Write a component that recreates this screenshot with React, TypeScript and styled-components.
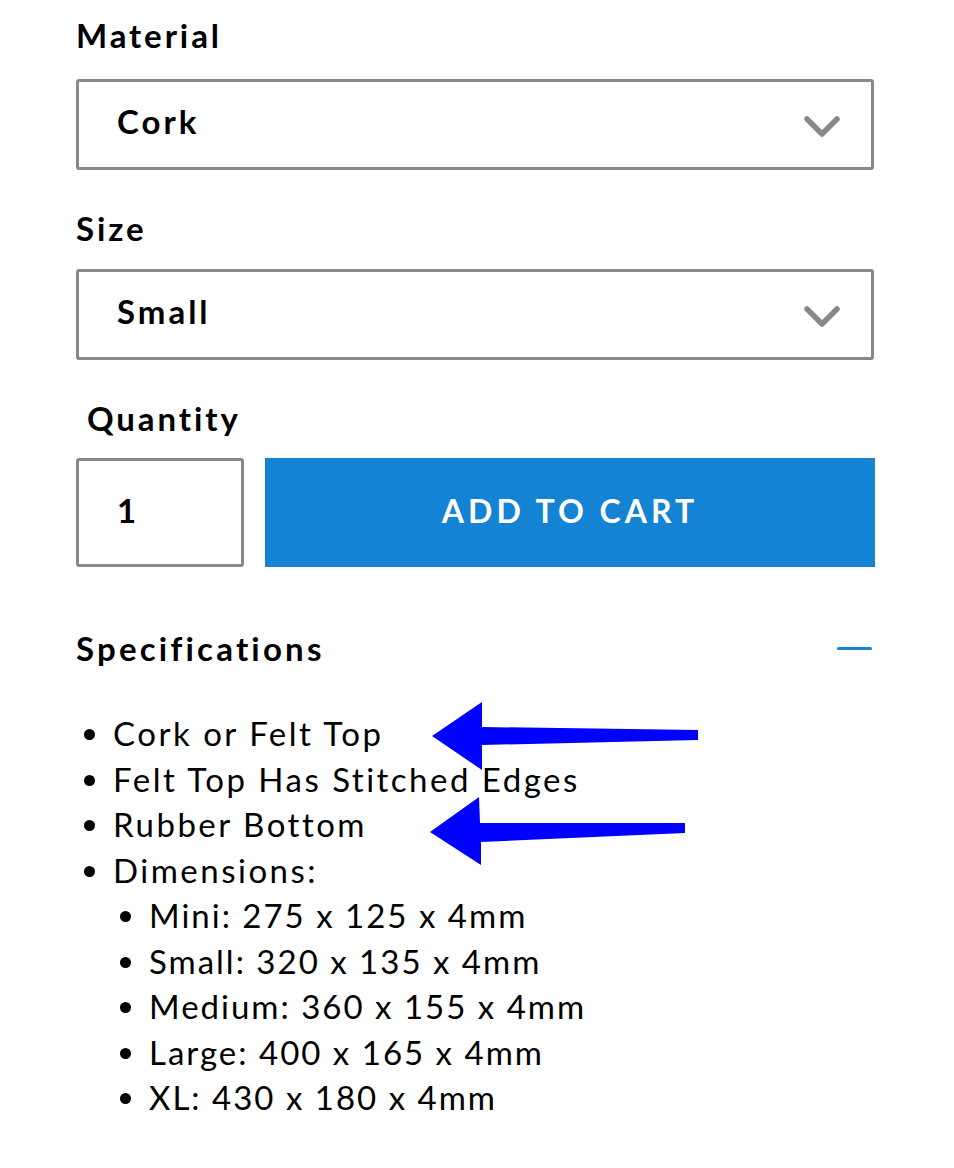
import React from "react";
import styled, { createGlobalStyle } from "styled-components";

const Global = createGlobalStyle`
  html, body { margin: 0; padding: 0; background: #fff; }
  body { font-family: Lato, "Noto Sans", sans-serif; color: #000; }
`;

const Page = styled.div`
  position: relative;
  width: 954px;
  min-height: 1168px;
  box-sizing: border-box;
  padding: 16px 80px 0 76px;
`;

const Label = styled.div<{ $indent?: number; $gap?: number }>`
  font-size: 33px;
  line-height: 38px;
  font-weight: 700;
  letter-spacing: 2.9px;
  padding-left: ${(p) => p.$indent ?? 0}px;
  margin-bottom: ${(p) => p.$gap ?? 22}px;
`;

const Select = styled.div`
  box-sizing: border-box;
  height: 91px;
  border: 3px solid #888;
  border-radius: 3px;
  display: flex;
  align-items: center;
  justify-content: space-between;
  padding: 0 31px 0 38px;
  margin-bottom: 39px;
`;

const SelectValue = styled.span`
  font-size: 33px;
  font-weight: 700;
  letter-spacing: 3px;
  margin-bottom: 7px;
`;

const ChevronSvg = styled.svg`
  margin-top: 4px;
`;

const Chevron = () => (
  <ChevronSvg width="36" height="22" viewBox="0 0 36 22">
    <path d="M3 3 L18 18 L33 3" fill="none" stroke="#888" strokeWidth="5.5" strokeLinecap="round" strokeLinejoin="round" />
  </ChevronSvg>
);

const CartRow = styled.div`
  display: flex;
  gap: 21px;
  height: 109px;
  margin-bottom: 62px;
`;

const QtyBox = styled.div`
  box-sizing: border-box;
  width: 168px;
  border: 3px solid #888;
  border-radius: 3px;
  display: flex;
  align-items: center;
  padding: 0 0 5px 38px;
  font-size: 33px;
  font-weight: 700;
`;

const CartButton = styled.button`
  flex: 1;
  border: none;
  background: #1483d4;
  color: #fff;
  font-family: Lato, "Noto Sans", sans-serif;
  font-size: 32px;
  font-weight: 700;
  letter-spacing: 4px;
  padding: 0 0 5px 0;
  margin-right: -1px;
`;

const SpecHeader = styled.div`
  display: flex;
  align-items: center;
  justify-content: space-between;
  font-size: 33px;
  line-height: 38px;
  font-weight: 700;
  letter-spacing: 3.2px;
  margin-bottom: 44px;
`;

const Minus = styled.span`
  width: 35px;
  height: 3px;
  border-radius: 2px;
  background: #1483d4;
  margin-right: 2px;
`;

const List = styled.ul`
  margin: 0;
  padding-left: 37px;
  font-size: 33px;
  line-height: 45.5px;
  font-weight: 400;
  letter-spacing: 2.5px;
  list-style: disc;
`;

const SubList = styled.ul`
  margin: 0;
  padding-left: 36px;
  list-style: disc;
  letter-spacing: 2px;
`;

const Arrows = styled.svg`
  position: absolute;
  left: 0;
  top: 0;
  pointer-events: none;
`;

export default function App() {
  return (
    <>
      <Global />
      <Page>
        <Label $gap={25}>Material</Label>
        <Select>
          <SelectValue>Cork</SelectValue>
          <Chevron />
        </Select>
        <Label>Size</Label>
        <Select>
          <SelectValue>Small</SelectValue>
          <Chevron />
        </Select>
        <Label $indent={11} $gap={21}>Quantity</Label>
        <CartRow>
          <QtyBox>1</QtyBox>
          <CartButton>ADD TO CART</CartButton>
        </CartRow>
        <SpecHeader>
          <span>Specifications</span>
          <Minus />
        </SpecHeader>
        <List>
          <li>Cork or Felt Top</li>
          <li>Felt Top Has Stitched Edges</li>
          <li>Rubber Bottom</li>
          <li>
            Dimensions:
            <SubList>
              <li>Mini: 275 x 125 x 4mm</li>
              <li>Small: 320 x 135 x 4mm</li>
              <li>Medium: 360 x 155 x 4mm</li>
              <li>Large: 400 x 165 x 4mm</li>
              <li>XL: 430 x 180 x 4mm</li>
            </SubList>
          </li>
        </List>
        <Arrows width="954" height="1168" viewBox="0 0 954 1168">
          <polygon points="432,736 482,702 482,727 698,730 698,740 482,745 482,770" fill="#0000ff" />
          <polygon points="430,832 479,797 480,823 685,823 685,833 481,842 481,865" fill="#0000ff" />
        </Arrows>
      </Page>
    </>
  );
}
